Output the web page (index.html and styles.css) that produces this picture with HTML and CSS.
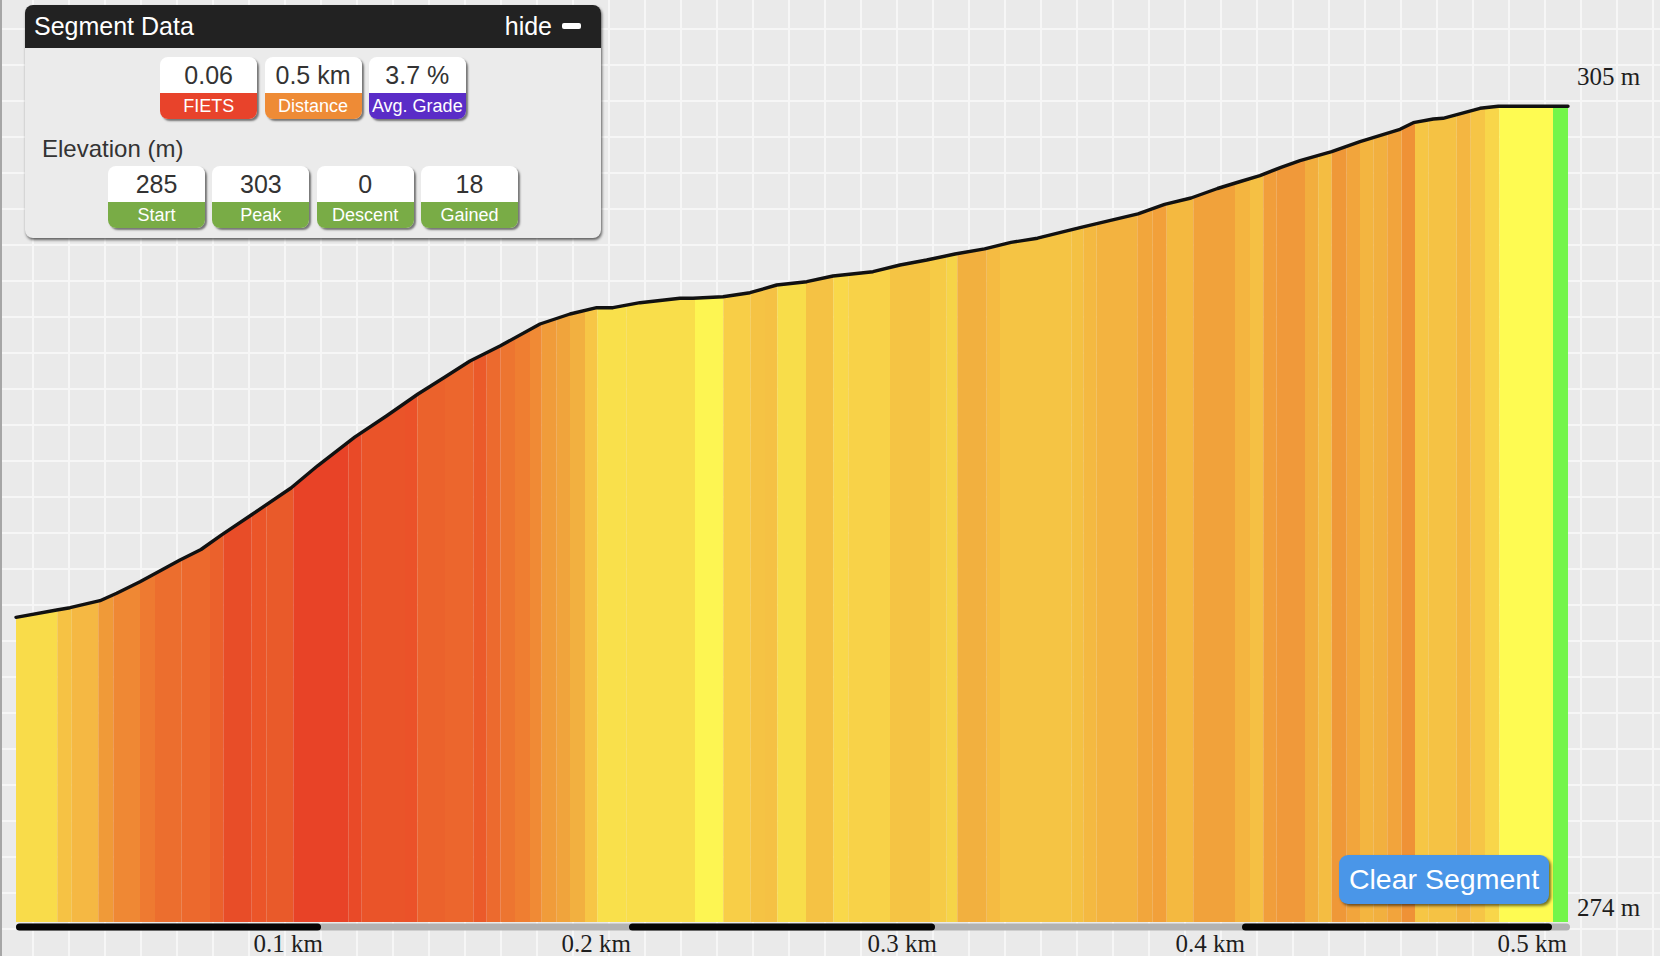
FILE: index.html
```html
<!DOCTYPE html>
<html lang="en">
<head>
<meta charset="utf-8">
<title>Segment Data</title>
<link rel="stylesheet" href="styles.css">
</head>
<body>
<div class="stage">
  <svg class="chart" width="1660" height="956" viewBox="0 0 1660 956" xmlns="http://www.w3.org/2000/svg">
    <defs>
      <clipPath id="profile-clip">
        <polygon points="16,617.3 56.7,610 70,607.7 100,600.7 116.7,593.3 140,581.7 166.7,567.3 180,560 201,549.5 222,534.6 252,514.5 291,488 317.6,465.8 354.7,437.2 386.4,416 418,394 445,377 470,361 500,346 540,324 570,314 596.7,307.7 613,307.7 640,302.7 680,298.3 693,298.3 723,296.7 750,292.7 776.7,285 806.7,281.7 833,276 873,271.7 900,265 926.7,260 955,254 984.6,248.8 1011,242.4 1037.5,238.2 1058.7,232.9 1080,227.6 1111.6,220.2 1138,213.9 1164.6,204.3 1191,198 1217.5,188.5 1238.7,182 1259.9,175.7 1281,167.3 1300,160.7 1331.7,151.7 1360,141.7 1400,129.3 1413.3,122.7 1433.3,119 1443,118.3 1480,108.3 1498.3,106.3 1568,106.3 1568,922 16,922"/>
      </clipPath>
    </defs>
    <g clip-path="url(#profile-clip)">
      <rect x="16" y="100" width="41.3" height="822" fill="#f9dc4a"/>
      <rect x="57.3" y="100" width="14.4" height="822" fill="#f6c244"/>
      <rect x="71.7" y="100" width="26.6" height="822" fill="#f5b843"/>
      <rect x="98.3" y="100" width="15" height="822" fill="#f09a38"/>
      <rect x="113.3" y="100" width="26.7" height="822" fill="#ef8834"/>
      <rect x="140" y="100" width="15" height="822" fill="#ee7a31"/>
      <rect x="155" y="100" width="26.7" height="822" fill="#ec6e2e"/>
      <rect x="181.7" y="100" width="28.3" height="822" fill="#ec692d"/>
      <rect x="210" y="100" width="13.3" height="822" fill="#eb612c"/>
      <rect x="223.3" y="100" width="28.4" height="822" fill="#e84d28"/>
      <rect x="251.7" y="100" width="15" height="822" fill="#eb5529"/>
      <rect x="266.7" y="100" width="26.6" height="822" fill="#e95a2a"/>
      <rect x="293.3" y="100" width="55" height="822" fill="#e84327"/>
      <rect x="348.3" y="100" width="13.4" height="822" fill="#e94a28"/>
      <rect x="361.7" y="100" width="43.3" height="822" fill="#ea5429"/>
      <rect x="405" y="100" width="12.3" height="822" fill="#eb5229"/>
      <rect x="417.3" y="100" width="27.7" height="822" fill="#eb622c"/>
      <rect x="445" y="100" width="28.3" height="822" fill="#ec662d"/>
      <rect x="473.3" y="100" width="13.4" height="822" fill="#eb5a2a"/>
      <rect x="486.7" y="100" width="14" height="822" fill="#ec6a2e"/>
      <rect x="500.7" y="100" width="14.3" height="822" fill="#ed7530"/>
      <rect x="515" y="100" width="15" height="822" fill="#ef7e31"/>
      <rect x="530" y="100" width="11.7" height="822" fill="#f08a35"/>
      <rect x="541.7" y="100" width="15" height="822" fill="#f09c3a"/>
      <rect x="556.7" y="100" width="13.3" height="822" fill="#f0a43c"/>
      <rect x="570" y="100" width="15" height="822" fill="#f2b040"/>
      <rect x="585" y="100" width="12.3" height="822" fill="#f7c646"/>
      <rect x="597.3" y="100" width="29.4" height="822" fill="#f9e04b"/>
      <rect x="626.7" y="100" width="68.3" height="822" fill="#f9de4b"/>
      <rect x="695" y="100" width="28.3" height="822" fill="#fdf552"/>
      <rect x="723.3" y="100" width="27.4" height="822" fill="#f8ce47"/>
      <rect x="750.7" y="100" width="14.3" height="822" fill="#f5c344"/>
      <rect x="765" y="100" width="12.3" height="822" fill="#f5c144"/>
      <rect x="777.3" y="100" width="28.7" height="822" fill="#f8dd4a"/>
      <rect x="806" y="100" width="27.3" height="822" fill="#f5c244"/>
      <rect x="833.3" y="100" width="15" height="822" fill="#f9d84a"/>
      <rect x="848.3" y="100" width="41.7" height="822" fill="#f8d248"/>
      <rect x="890" y="100" width="40" height="822" fill="#f5c444"/>
      <rect x="930" y="100" width="16.7" height="822" fill="#f6cb46"/>
      <rect x="946.7" y="100" width="10.6" height="822" fill="#f6d448"/>
      <rect x="957.3" y="100" width="29.4" height="822" fill="#f2b03f"/>
      <rect x="986.7" y="100" width="13.3" height="822" fill="#f5bb42"/>
      <rect x="1000" y="100" width="71.7" height="822" fill="#f5c444"/>
      <rect x="1071.7" y="100" width="11.6" height="822" fill="#f4c143"/>
      <rect x="1083.3" y="100" width="13.4" height="822" fill="#f4b941"/>
      <rect x="1096.7" y="100" width="40.6" height="822" fill="#f3b340"/>
      <rect x="1137.3" y="100" width="15.4" height="822" fill="#f2a63c"/>
      <rect x="1152.7" y="100" width="14" height="822" fill="#f2a03a"/>
      <rect x="1166.7" y="100" width="26.6" height="822" fill="#f4b940"/>
      <rect x="1193.3" y="100" width="41.7" height="822" fill="#f1a23b"/>
      <rect x="1235" y="100" width="15" height="822" fill="#f4b540"/>
      <rect x="1250" y="100" width="13.3" height="822" fill="#f5c044"/>
      <rect x="1263.3" y="100" width="13.4" height="822" fill="#f19e3b"/>
      <rect x="1276.7" y="100" width="28.3" height="822" fill="#f0993a"/>
      <rect x="1305" y="100" width="13.3" height="822" fill="#f2ae3e"/>
      <rect x="1318.3" y="100" width="13.4" height="822" fill="#f4bd42"/>
      <rect x="1331.7" y="100" width="15" height="822" fill="#ef9838"/>
      <rect x="1346.7" y="100" width="13.3" height="822" fill="#f2a53c"/>
      <rect x="1360" y="100" width="13.3" height="822" fill="#f3b540"/>
      <rect x="1373.3" y="100" width="14" height="822" fill="#f2b03f"/>
      <rect x="1387.3" y="100" width="14.4" height="822" fill="#f2a43c"/>
      <rect x="1401.7" y="100" width="13.3" height="822" fill="#ef9236"/>
      <rect x="1415" y="100" width="13.3" height="822" fill="#f6c645"/>
      <rect x="1428.3" y="100" width="28.4" height="822" fill="#f5c244"/>
      <rect x="1456.7" y="100" width="14" height="822" fill="#f4b641"/>
      <rect x="1470.7" y="100" width="14.3" height="822" fill="#f6c546"/>
      <rect x="1485" y="100" width="14.3" height="822" fill="#f8d64a"/>
      <rect x="1499.3" y="100" width="53.7" height="822" fill="#fefb52"/>
      <rect x="1553" y="100" width="15" height="822" fill="#74f54a"/>
    </g>
    <polyline class="profile-line" points="16,617.3 56.7,610 70,607.7 100,600.7 116.7,593.3 140,581.7 166.7,567.3 180,560 201,549.5 222,534.6 252,514.5 291,488 317.6,465.8 354.7,437.2 386.4,416 418,394 445,377 470,361 500,346 540,324 570,314 596.7,307.7 613,307.7 640,302.7 680,298.3 693,298.3 723,296.7 750,292.7 776.7,285 806.7,281.7 833,276 873,271.7 900,265 926.7,260 955,254 984.6,248.8 1011,242.4 1037.5,238.2 1058.7,232.9 1080,227.6 1111.6,220.2 1138,213.9 1164.6,204.3 1191,198 1217.5,188.5 1238.7,182 1259.9,175.7 1281,167.3 1300,160.7 1331.7,151.7 1360,141.7 1400,129.3 1413.3,122.7 1433.3,119 1443,118.3 1480,108.3 1498.3,106.3 1568,106.3"/>
    <line class="axis-track" x1="19.5" y1="927" x2="1566.5" y2="927"/>
    <line class="axis-band" x1="19.5" y1="927" x2="317.5" y2="927"/>
    <line class="axis-band" x1="632.5" y1="927" x2="931.5" y2="927"/>
    <line class="axis-band" x1="1245.5" y1="927" x2="1548.5" y2="927"/>
    <text class="axis-label" x="1577" y="85">305 m</text>
    <text class="axis-label" x="1577" y="916">274 m</text>
    <text class="axis-label end" x="323" y="952">0.1 km</text>
    <text class="axis-label end" x="631" y="952">0.2 km</text>
    <text class="axis-label end" x="937" y="952">0.3 km</text>
    <text class="axis-label end" x="1245" y="952">0.4 km</text>
    <text class="axis-label end" x="1567" y="952">0.5 km</text>
  </svg>

  <section class="panel">
    <header class="panel-header">
      <span class="panel-title">Segment Data</span>
      <span class="hide-toggle">hide <span class="minus"></span></span>
    </header>
    <div class="panel-body">
      <div class="stat-row">
        <div class="stat">
          <div class="stat-value">0.06</div>
          <div class="stat-label red">FIETS</div>
        </div>
        <div class="stat">
          <div class="stat-value">0.5 km</div>
          <div class="stat-label orange">Distance</div>
        </div>
        <div class="stat">
          <div class="stat-value">3.7 %</div>
          <div class="stat-label purple">Avg. Grade</div>
        </div>
      </div>
      <div class="section-title">Elevation (m)</div>
      <div class="stat-row">
        <div class="stat">
          <div class="stat-value">285</div>
          <div class="stat-label green">Start</div>
        </div>
        <div class="stat">
          <div class="stat-value">303</div>
          <div class="stat-label green">Peak</div>
        </div>
        <div class="stat">
          <div class="stat-value">0</div>
          <div class="stat-label green">Descent</div>
        </div>
        <div class="stat">
          <div class="stat-value">18</div>
          <div class="stat-label green">Gained</div>
        </div>
      </div>
    </div>
  </section>

  <button class="clear-btn" type="button">Clear Segment</button>
</div>
</body>
</html>
```

FILE: styles.css
```css
* {
  box-sizing: border-box;
}

html,
body {
  margin: 0;
  padding: 0;
}

body {
  width: 1660px;
  height: 956px;
  overflow: hidden;
  font-family: "Liberation Sans", Arial, sans-serif;
}

.stage {
  position: relative;
  width: 1660px;
  height: 956px;
  background-color: #eaeaea;
  background-image:
    linear-gradient(to right, #f6f6f6 2px, transparent 2px),
    linear-gradient(to bottom, #f6f6f6 2px, transparent 2px);
  background-size: 36px 36px;
  background-position: 32px 28px;
  box-shadow: inset 2px 0 0 #a6a6a6;
}

.chart {
  display: block;
}

.profile-line {
  fill: none;
  stroke: #111;
  stroke-width: 3.4;
  stroke-linejoin: round;
  stroke-linecap: round;
}

.axis-track {
  stroke: #b2b2b2;
  stroke-width: 7;
  stroke-linecap: round;
}

.axis-band {
  stroke: #050505;
  stroke-width: 7;
  stroke-linecap: round;
}

.axis-label {
  font-family: "Liberation Serif", "Times New Roman", serif;
  font-size: 25px;
  fill: #1e1e1e;
}

.axis-label.end {
  text-anchor: end;
}

/* Segment data panel */
.panel {
  position: absolute;
  left: 25px;
  top: 5px;
  width: 576px;
  height: 233px;
  background: #ebebeb;
  border-radius: 8px;
  box-shadow: 1px 2px 3px rgba(0, 0, 0, 0.6);
}

.panel-header {
  height: 42.7px;
  background: #222;
  color: #fff;
  border-radius: 8px 8px 0 0;
  display: flex;
  align-items: center;
  justify-content: space-between;
  padding: 0 20px 0 9px;
  font-size: 25px;
}

.hide-toggle {
  display: flex;
  align-items: center;
  gap: 10px;
}

.minus {
  display: block;
  width: 19px;
  height: 6px;
  background: #fff;
  border-radius: 2px;
}

.panel-body {
  padding-top: 9.6px;
}

.stat-row {
  display: flex;
  justify-content: center;
  gap: 7.3px;
}

.stat {
  width: 97px;
  height: 62px;
  border-radius: 8px;
  overflow: hidden;
  box-shadow: 2px 2px 2px rgba(0, 0, 0, 0.5);
}

.stat-value {
  height: 36px;
  background: #fff;
  color: #333;
  font-size: 25px;
  line-height: 37px;
  text-align: center;
}

.stat-label {
  height: 26px;
  color: #fff;
  font-size: 18px;
  line-height: 26px;
  text-align: center;
  white-space: nowrap;
}

.stat-label.red {
  background: #e8432b;
}

.stat-label.orange {
  background: #ee8b36;
}

.stat-label.purple {
  background: #5a2cc7;
}

.stat-label.green {
  background: #79ac46;
}

.section-title {
  margin: 15.6px 0 3.1px;
  padding-left: 17px;
  color: #333;
  font-size: 24px;
  line-height: 28px;
}

/* Clear segment button */
.clear-btn {
  position: absolute;
  left: 1339px;
  top: 855px;
  width: 210px;
  height: 49px;
  padding: 0;
  border: none;
  border-radius: 9px;
  background: #4a96e8;
  color: #fff;
  font-family: "Liberation Sans", Arial, sans-serif;
  font-size: 28.5px;
  line-height: 49px;
  text-align: center;
  box-shadow: 2px 2px 3px rgba(0, 0, 0, 0.55);
}
```
